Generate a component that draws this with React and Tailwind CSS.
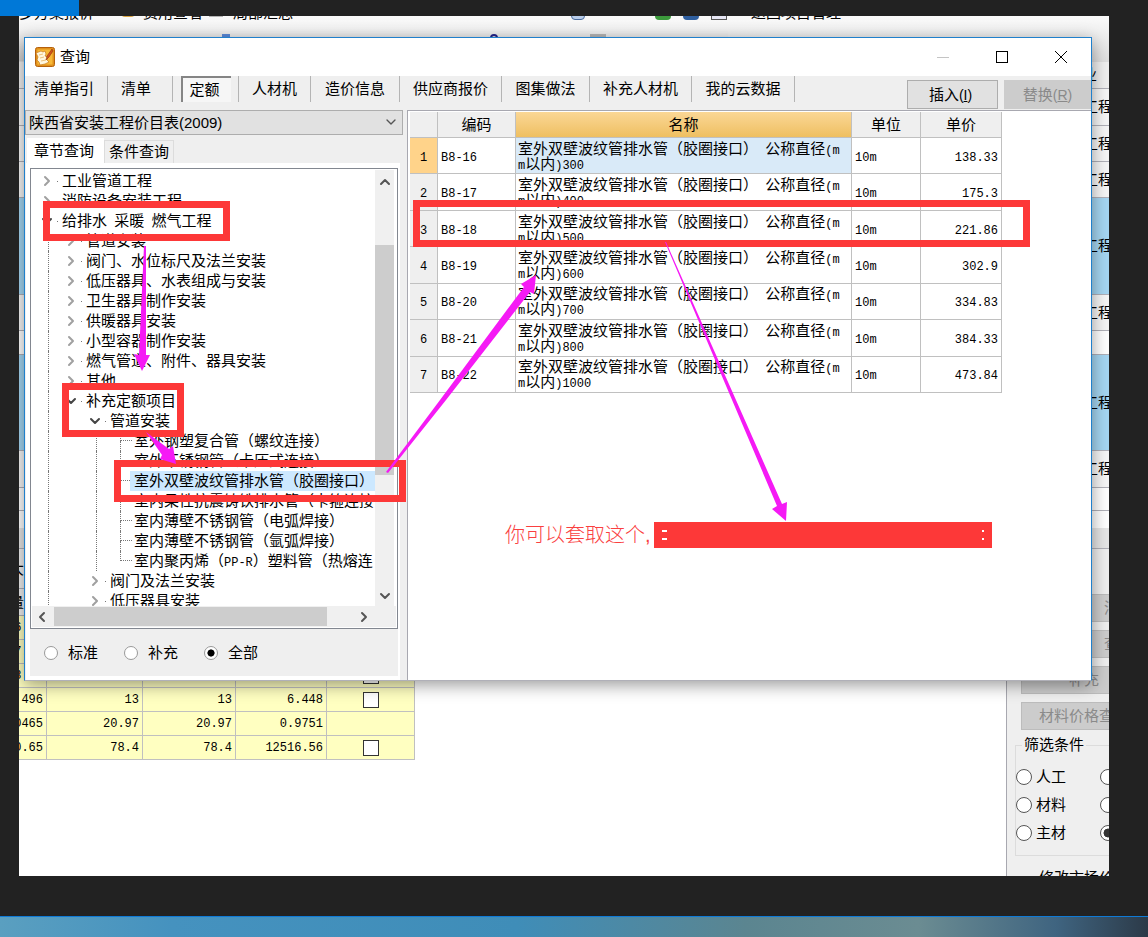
import { useState } from "react";
import { FiChevronDown, FiChevronLeft, FiChevronRight, FiChevronUp } from "react-icons/fi";

const TABS = [
    { label: "清单指引", width: "w-[83px] pr-1" },
    { label: "清单", width: "w-[65px] pr-2" },
    { label: "定额", width: "w-[66px]" },
    { label: "人材机", width: "w-[72px]" },
    { label: "造价信息", width: "w-[89px]" },
    { label: "供应商报价", width: "w-[102px]" },
    { label: "图集做法", width: "w-[88px]" },
    { label: "补充人材机", width: "w-[102px]" },
    { label: "我的云数据", width: "w-[103px]" },
];

// guides: one entry per ancestor column, true where a dotted line runs through
const TREE = [
    { label: "工业管道工程", guides: [] },
    { label: "消防设备安装工程", guides: [] },
    { label: "给排水 采暖 燃气工程", guides: [], open: true },
    { label: "管道安装", guides: [true] },
    { label: "阀门、水位标尺及法兰安装", guides: [true] },
    { label: "低压器具、水表组成与安装", guides: [true] },
    { label: "卫生器具制作安装", guides: [true] },
    { label: "供暖器具安装", guides: [true] },
    { label: "小型容器制作安装", guides: [true] },
    { label: "燃气管道、附件、器具安装", guides: [true] },
    { label: "其他", guides: [true] },
    { label: "补充定额项目", guides: [true], open: true },
    { label: "管道安装", guides: [true, false], open: true },
    { label: "室外钢塑复合管（螺纹连接）", guides: [true, false, true], leaf: true },
    { label: "室外不锈钢管（卡压式连接）", guides: [true, false, true], leaf: true },
    { label: "室外双壁波纹管排水管（胶圈接口）", guides: [true, false, true], leaf: true },
    { label: "室内柔性抗震铸铁排水管（卡箍连接", guides: [true, false, true], leaf: true },
    { label: "室内薄壁不锈钢管（电弧焊接）", guides: [true, false, true], leaf: true },
    { label: "室内薄壁不锈钢管（氩弧焊接）", guides: [true, false, true], leaf: true },
    { label: "室内聚丙烯（PP-R）塑料管（热熔连", guides: [true, false, true], leaf: true, last: true },
    { label: "阀门及法兰安装", guides: [true, false] },
    { label: "低压器具安装", guides: [true, false] },
];

const QUOTAS = [
    { code: "B8-16", size: "300", price: "138.33" },
    { code: "B8-17", size: "400", price: "175.3" },
    { code: "B8-18", size: "500", price: "221.86" },
    { code: "B8-19", size: "600", price: "302.9" },
    { code: "B8-20", size: "700", price: "334.83" },
    { code: "B8-21", size: "800", price: "384.33" },
    { code: "B8-22", size: "1000", price: "473.84" },
];

const PROJECT_ROWS = [
    { className: "h-[27px] bg-[#efefef] pr-4", text: "专业" },
    { className: "h-[37px] bg-[#f6f6f6]", text: "工程" },
    { className: "h-9 bg-[#f6f6f6]", text: "工程" },
    { className: "h-9 bg-[#f6f6f6]", text: "工程" },
    { className: "h-[97px] bg-[#a5d6f2]", text: "工程" },
    { className: "h-9 bg-[#f6f6f6]", text: "工程" },
    { className: "h-6 bg-white", text: "" },
    { className: "h-24 bg-[#a5d6f2]", text: "工程" },
    { className: "h-[37px] bg-[#f6f6f6]", text: "工程" },
    { className: "h-[23px] bg-white", text: "" },
    { className: "h-[17px] bg-white border-b-transparent", text: "" },
    { className: "h-[21px] bg-[#e6e6e6]", text: "" },
];

const MATERIAL_ROWS = [
    { cells: ["6.21", "", "", ""], check: false },
    { cells: ["7.35", "", "", ""], check: false },
    { cells: ["8.04", "", "", ""], check: true },
    { cells: ["496", "13", "13", "6.448"], check: true },
    { cells: ["0465", "20.97", "20.97", "0.9751"], check: false },
    { cells: ["0.65", "78.4", "78.4", "12516.56"], check: true },
];

// Latin runs are set half as wide as the Chinese characters around them
const Mixed = ({ text }) =>
    text.split(/([\x20-\x7e]+)/).map((part, index) =>
        index % 2 ? (
            <span
                key={index}
                className="whitespace-pre font-['Liberation_Mono',monospace] text-[12px] leading-[8px]"
            >
                {part}
            </span>
        ) : (
            part
        ),
    );

const AppIcon = () => (
    <svg className="size-5" viewBox="0 0 20 20" aria-hidden="true">
        <rect x="0.5" y="0.5" width="19" height="19" rx="2" fill="#e0901c" stroke="#b5600c" />
        <rect x="2.5" y="2.5" width="15" height="15" fill="#f8b938" />
        <path d="M1 6 L6 4 L8 5 L10 4 L11 7 L10 9 L13 10 L12 13 L14 15 L10 17 L5 18 L4 15 L2 13 L3 10 Z" fill="#fff7df" stroke="#c9791a" strokeWidth="0.7" />
        <path d="M4 8 L8 7 M5 11 L9 10 M6 14 L11 13" stroke="#e9b566" strokeWidth="0.8" />
        <path d="M17 2 L12 9 L11 13 L14 10 L18 4 Z" fill="#d3541c" stroke="#8f2f0a" strokeWidth="0.6" />
    </svg>
);

const Toolbar = () => (
    <div className="h-[46px] overflow-hidden bg-linear-to-b from-[#fafafa] to-[#dedede]">
        <div className="flex h-[5px] items-end whitespace-nowrap leading-4">
            <span className="w-[102px]">多方案报价</span>
            <span className="mb-1 h-2 w-3.5 rounded-full bg-[#d9a441]" />
            <span className="ml-2">费用查看</span>
            <span className="mb-1 ml-1.5 h-1 w-3.5 bg-[#b5b5b5]" />
            <span className="ml-2.5">局部汇总</span>
            <span className="mb-px ml-[278px] h-3 w-3.5 rounded-b border border-[#4c6ea0] bg-[#b9cdea]" />
            <span className="mb-px ml-[70px] h-3 w-4 rounded-b bg-[#3c9a3c]" />
            <span className="mb-px ml-3 h-3 w-4 rounded-b bg-[#2f5f9f]" />
            <span className="mb-px ml-3 h-3 w-4 border border-[#555] bg-[#e7e7f5]" />
            <span className="ml-6">返回项目管理</span>
        </div>
        <div className="mt-2 flex h-8 w-[65%] items-start rounded-t bg-linear-to-b from-[#f2f2f2] to-[#cfcfcf]">
            <span className="mt-[5px] ml-[203px] h-2 w-2 bg-[#5b8ad8]" />
            <span className="mt-[5px] ml-[260px] h-2 w-2 rounded-full border-2 border-[#24248a]" />
            <span className="mt-[5px] ml-[92px] h-2 w-4 bg-[#b5b5b5]" />
        </div>
    </div>
);

const MaterialTable = () => (
    <table className="w-[396px] table-fixed border-separate border-spacing-0 font-['Liberation_Mono',monospace] text-[12px]">
        <colgroup>
            <col className="w-7" />
            <col className="w-24" />
            <col className="w-[93px]" />
            <col className="w-[91px]" />
            <col className="w-[88px]" />
        </colgroup>
        <tbody>
            {MATERIAL_ROWS.map((row, index) => (
                <tr key={index} className="h-6 bg-[#ffffc1]">
                    {row.cells.map((cell, cellIndex) => (
                        <td
                            key={cellIndex}
                            className="overflow-hidden border-r border-b border-[#c0c0c0] pr-[3px] text-right leading-5"
                        >
                            <span className="flex justify-end">{cell}</span>
                        </td>
                    ))}
                    <td className="border-r border-b border-[#c0c0c0]">
                        {row.check && (
                            <input
                                type="checkbox"
                                aria-label={`选择第${index + 1}行`}
                                className="mx-auto block size-4 appearance-none border border-[#333] bg-white checked:bg-[#333]"
                            />
                        )}
                    </td>
                </tr>
            ))}
        </tbody>
    </table>
);

const FilterRadio = ({ label, ...props }) => (
    <label className="flex h-7 items-center gap-1">
        <input
            type="radio"
            name="filter"
            className="size-4 shrink-0 appearance-none rounded-full border border-[#555] bg-white checked:bg-[radial-gradient(circle,#333_42%,#fff_48%)]"
            {...props}
        />
        {label}
    </label>
);

const SidePanel = () => (
    <aside className="w-[103px] shrink-0 overflow-hidden border-l border-[#a8a8b0] bg-[#efefef] pt-[45px] whitespace-nowrap">
        <div className="ml-3.5 flex w-[126px] flex-col gap-2 text-[#8a8a8a]">
            <button className="h-7 border border-[#bcbcbc] bg-[#ccc] pl-[82px] text-left">消耗</button>
            <button className="h-7 border border-[#bcbcbc] bg-[#ccc] pl-[82px] text-left">查询</button>
            <button className="h-7 border border-[#bcbcbc] bg-[#ccc]">补充</button>
            <button className="h-7 border border-[#bcbcbc] bg-[#ccc]">材料价格查询</button>
        </div>
        <fieldset className="mt-[5px] ml-2 w-[170px] border border-[#dcdcdc] pb-2">
            <legend className="ml-1.5 px-0.5 leading-5">筛选条件</legend>
            <div className="grid grid-cols-[84px_1fr] pt-2">
                <FilterRadio label="人工" />
                <FilterRadio label="机械" />
                <FilterRadio label="材料" />
                <FilterRadio label="设备" />
                <FilterRadio label="主材" />
                <FilterRadio label="全部" defaultChecked />
            </div>
        </fieldset>
        <div className="mt-3 ml-8 h-2 overflow-hidden leading-5">修改市场价</div>
    </aside>
);

const Workspace = () => (
    <div className="flex h-full flex-col">
        <Toolbar />
        <div>
            {PROJECT_ROWS.map((row, index) => (
                <div
                    key={index}
                    className={`flex items-center justify-end overflow-hidden border-b border-[#b0b0b8] whitespace-nowrap ${row.className}`}
                >
                    <span className="-mr-1">{row.text}</span>
                </div>
            ))}
        </div>
        <div className="flex flex-1">
            <div className="flex-1 bg-white">
                <div className="h-10 overflow-hidden border-b border-[#b0b0b8] bg-[#efefef] leading-10">
                    <span className="-ml-2.5">大</span>
                </div>
                <div className="h-[27px] overflow-hidden border-b border-[#b0b0b8] bg-[#efefef] leading-7">
                    <span className="-ml-2.5">量</span>
                </div>
                <MaterialTable />
            </div>
            <SidePanel />
        </div>
    </div>
);

const TreeRow = ({ node, selected, onSelect }) => {
    const Arrow = node.open ? FiChevronDown : FiChevronRight;
    return (
        <li className="flex h-5 pl-1 whitespace-nowrap" onClick={onSelect}>
            {node.guides.map((line, index) => (
                <span key={index} className="w-6 shrink-0 pl-3">
                    {line && <span className="block h-full border-l border-dotted border-[#777]" />}
                </span>
            ))}
            {node.leaf ? (
                <span className="w-6 shrink-0 pl-3">
                    <span className="block h-1/2 border-b border-l border-dotted border-[#777]" />
                    {!node.last && <span className="block h-1/2 border-l border-dotted border-[#777]" />}
                </span>
            ) : (
                <span className="flex w-6 shrink-0 items-center justify-between pl-[3px]">
                    <Arrow
                        className={`size-4 shrink-0 stroke-3 ${node.open ? "text-[#444]" : "text-[#a0a0a0]"}`}
                    />
                    <span className="mr-0.5 w-px border-t border-[#777]" />
                </span>
            )}
            <span className={`-ml-0.5 flex-1 pl-1 leading-5 ${selected ? "bg-[#cce8ff]" : ""}`}>
                <Mixed text={node.label} />
            </span>
        </li>
    );
};

const ChapterTree = () => {
    const [selected, setSelected] = useState(15);

    return (
        <div className="border border-[#828790] bg-white p-px">
            <div className="flex h-[436px] overflow-hidden">
                <ul className="min-w-0 flex-1 overflow-hidden pt-px">
                    {TREE.map((node, index) => (
                        <TreeRow
                            key={index}
                            node={node}
                            selected={index === selected}
                            onSelect={() => setSelected(index)}
                        />
                    ))}
                </ul>
                <div className="mr-0.5 flex w-[19px] flex-col items-center bg-[#f0f0f0]">
                    <FiChevronUp className="mt-1 size-4 shrink-0 stroke-3 text-[#555]" />
                    <div className="mt-[55px] h-[230px] w-full bg-[#cdcdcd]" />
                    <FiChevronDown className="mt-auto mb-0.5 size-4 shrink-0 stroke-3 text-[#555]" />
                </div>
            </div>
            <div className="flex h-[21px] items-center bg-[#f0f0f0]">
                <FiChevronLeft className="mr-1 ml-0.5 size-4 stroke-3 text-[#555]" />
                <div className="h-[19px] w-[273px] bg-[#cdcdcd]" />
                <FiChevronRight className="mr-6 ml-auto size-4 stroke-3 text-[#555]" />
            </div>
        </div>
    );
};

const ScopeRadio = ({ label, ...props }) => (
    <label className="flex w-20 items-center gap-2.5">
        <input
            type="radio"
            name="scope"
            className="size-3.5 appearance-none rounded-full border border-[#999] bg-white checked:bg-[radial-gradient(circle,#000_38%,#fff_46%)]"
            {...props}
        />
        {label}
    </label>
);

const QueryPanel = () => (
    <div className="flex w-[382px] shrink-0 flex-col">
        <div className="relative mr-1">
            <select
                aria-label="定额库"
                className="block h-[25px] w-full appearance-none border border-[#adadad] bg-[#e1e1e1] pl-[3px]"
            >
                <option>陕西省安装工程价目表(2009)</option>
            </select>
            <FiChevronDown className="pointer-events-none absolute top-1 right-1 size-4 text-[#555]" />
        </div>
        <div className="flex items-end pt-[3px] pl-0.5">
            <button className="h-[25px] w-[77px] bg-white pr-[3px]">章节查询</button>
            <button className="h-[23px] w-[70px] border border-b-0 border-[#dcdcdc]">条件查询</button>
        </div>
        <div className="mr-[7px] ml-px border-4 border-t-[5px] border-r-2 border-white bg-[#efefef]">
            <ChapterTree />
            <div className="flex h-[47px] items-center pl-3.5">
                <ScopeRadio label="标准" />
                <ScopeRadio label="补充" />
                <ScopeRadio label="全部" defaultChecked />
            </div>
        </div>
    </div>
);

const QuotaTable = () => (
    <table className="h-[281px] w-[592px] table-fixed border-separate border-spacing-0">
        <colgroup>
            <col className="w-7" />
            <col className="w-[78px]" />
            <col className="w-[336px]" />
            <col className="w-[69px]" />
            <col className="w-[81px]" />
        </colgroup>
        <thead>
            <tr className="h-[26px] bg-[#efefef]">
                <th className="border-r border-b border-[#c0c0c0]" />
                <th className="border-r border-b border-[#c0c0c0] font-normal">编码</th>
                <th className="border-r border-b border-[#c0c0c0] bg-linear-to-b from-[#fbd795] to-[#eebf60] font-normal">
                    名称
                </th>
                <th className="border-r border-b border-[#c0c0c0] font-normal">单位</th>
                <th className="border-r border-b border-[#c0c0c0] font-normal">单价</th>
            </tr>
        </thead>
        <tbody>
            {QUOTAS.map((quota, index) => (
                <tr key={quota.code}>
                    <td
                        className={`border-r border-b border-[#c0c0c0] text-center ${
                            index === 0 ? "bg-[#ffd38a]" : "bg-[#efefef]"
                        }`}
                    >
                        <Mixed text={String(index + 1)} />
                    </td>
                    <td className="border-r border-b border-[#c0c0c0] pl-[3px]">
                        <Mixed text={quota.code} />
                    </td>
                    <td
                        className={`border-r border-b border-[#c0c0c0] pl-0.5 leading-[15px] whitespace-nowrap ${
                            index === 0 ? "bg-[#d9eaf8]" : ""
                        }`}
                    >
                        <Mixed text="室外双壁波纹管排水管（胶圈接口） 公称直径(m" />
                        <br />
                        <Mixed text={`m以内)${quota.size}`} />
                    </td>
                    <td className="border-r border-b border-[#c0c0c0] pl-[3px]">
                        <Mixed text="10m" />
                    </td>
                    <td className="border-r border-b border-[#c0c0c0] pr-[3px] text-right">
                        <Mixed text={quota.price} />
                    </td>
                </tr>
            ))}
        </tbody>
    </table>
);

const QueryDialog = () => {
    const [tab, setTab] = useState("定额");

    return (
        <section className="absolute top-[21px] right-[17px] left-[5px] flex flex-col border border-[#2080cc] border-b-[#b0b0b8] bg-[#efefef] shadow-[0_4px_16px_rgba(0,0,0,0.4)]">
            <header className="flex h-[38px] items-center bg-white pr-px pl-2.5">
                <AppIcon />
                <h1 className="ml-[5px]">查询</h1>
                <button className="ml-auto flex h-full w-[59px] items-center justify-center" aria-label="最小化">
                    <span className="h-px w-3 bg-[#c4c4c4]" />
                </button>
                <button className="flex h-full w-[59px] items-center justify-center" aria-label="最大化">
                    <span className="size-3 border border-black" />
                </button>
                <button className="flex h-full w-[59px] items-center justify-center" aria-label="关闭">
                    <svg className="size-3" viewBox="0 0 12 12" stroke="#000" aria-hidden="true">
                        <path d="M0 0 L12 12 M12 0 L0 12" />
                    </svg>
                </button>
            </header>
            <div className="flex h-[34px]">
                <nav className="flex">
                    {TABS.map(({ label, width }) => (
                        <button
                            key={label}
                            onClick={() => setTab(label)}
                            className={`flex h-[26px] items-center justify-center border-r border-[#b4b4b4] ${width}`}
                        >
                            {tab === label ? (
                                <span className="w-[50px] border-t-2 border-l-2 border-[#858585] bg-[#f6f6f6] pr-1 leading-6">
                                    {label}
                                </span>
                            ) : (
                                label
                            )}
                        </button>
                    ))}
                </nav>
                <div className="ml-auto flex gap-1.5 pt-1">
                    <button className="h-[29px] w-[91px] border border-[#adadad] bg-[#e1e1e1] pr-1">
                        插入<span className="text-[14px]">(<u>I</u>)</span>
                    </button>
                    <button className="h-[29px] w-[87px] bg-[#ccc] text-[#8a8a8a]" disabled>
                        替换<span className="text-[14px]">(<u>R</u>)</span>
                    </button>
                </div>
            </div>
            <div className="flex h-[570px]">
                <QueryPanel />
                <div className="flex-1 border-t border-l border-[#a8a8b0] bg-white pt-px pl-0.5">
                    <QuotaTable />
                </div>
            </div>
        </section>
    );
};

const Markup = () => (
    <>
        <svg className="pointer-events-none absolute inset-0 h-full w-full" aria-hidden="true">
            <g transform="translate(-19 -16)">
                <g fill="none" stroke="#fd3838" strokeWidth="7">
                    <rect x="46.5" y="204.5" width="180" height="33" />
                    <rect x="65.5" y="386.5" width="115" height="47" />
                    <rect x="117.5" y="463.5" width="285" height="35" />
                    <rect x="416.5" y="203.5" width="610" height="40" />
                </g>
                <g fill="#f51af5">
                    <polygon points="144,246 146,246 146,355 150,355 142,371 134,354 139,355" />
                    <polygon points="146,432 169,449 173,446 176,464 160,459 162,455" />
                    <polygon points="386,472 440,400 524,287 521,284 536,275 534,294 530,292 446,400 388,473" />
                    <polygon points="665,242 666,242 782,504 787,502 786,521 772,509 777,506" />
                </g>
            </g>
        </svg>
        <p className="absolute top-[506px] left-[486px] flex h-[26px] items-center text-[20px] font-light text-[#fa4040]">
            你可以套取这个
            <span className="w-[9px]">,</span>
            <span className="flex h-full w-[338px] justify-between bg-[#fd3838] px-2 py-2">
                <span className="w-[5px] border-y-2 border-white" />
                <span className="w-0.5 border-y-2 border-white" />
            </span>
        </p>
    </>
);

const App = () => (
    <div className="flex min-h-screen flex-col bg-[#222] font-['Liberation_Sans','Noto_Sans_CJK_SC',sans-serif] text-[15px] leading-5 text-black">
        <div className="h-4 shrink-0">
            <div className="h-full w-[79px] bg-[#0078d7]" />
        </div>
        <main className="relative mr-[39px] ml-[19px] flex flex-1 flex-col overflow-hidden bg-white">
            <Workspace />
            <QueryDialog />
            <Markup />
        </main>
        <footer className="mt-10 h-[21px] shrink-0 border-t border-[#0f7ad6] bg-[linear-gradient(90deg,#5a9fc0,#4592bf_15%,#3f8db8_45%,#5b8590_65%,#6b8c92_80%,#3f6480_92%,#2c3a48)]" />
    </div>
);

export default App;
